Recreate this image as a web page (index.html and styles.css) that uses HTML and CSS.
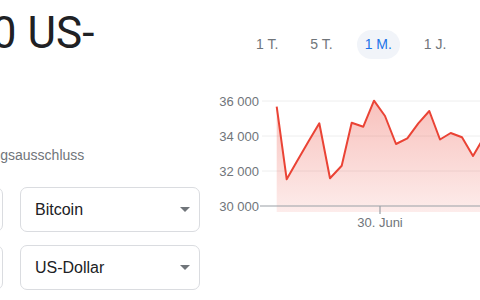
FILE: index.html
```html
<!DOCTYPE html>
<html lang="de">
<head>
    <meta charset="UTF-8">
    <meta name="viewport" content="width=device-width, initial-scale=1.0">
    <title>Bitcoin in US-Dollar</title>
    <link rel="stylesheet" href="styles.css">
</head>
<body>
    <div class="page">
        <!-- Converter column (cut off on the left) -->
        <div class="converter">
            <div class="result">34 590 US-</div>
            <div class="source">Haftungsausschluss</div>
            <div class="fields">
                <div class="field"><span class="amount">1</span></div>
                <div class="field select">
                    <span>Bitcoin</span>
                    <span class="caret"></span>
                </div>
                <div class="field"><span class="amount">34590</span></div>
                <div class="field select">
                    <span>US-Dollar</span>
                    <span class="caret"></span>
                </div>
            </div>
        </div>

        <!-- Chart column -->
        <div class="chart-panel">
            <div class="ranges">
                <span class="range">1 T.</span>
                <span class="range">5 T.</span>
                <span class="range active">1 M.</span>
                <span class="range">1 J.</span>
            </div>
            <svg class="chart" width="300" height="145" viewBox="210 85 300 145">
                <defs>
                    <linearGradient id="fade" x1="0" y1="100" x2="0" y2="212" gradientUnits="userSpaceOnUse">
                        <stop offset="0" stop-color="#ea4335" stop-opacity="0.33"/>
                        <stop offset="1" stop-color="#ea4335" stop-opacity="0.1"/>
                    </linearGradient>
                </defs>
                <g class="grid">
                    <line x1="262" y1="101" x2="510" y2="101"/>
                    <line x1="262" y1="136" x2="510" y2="136"/>
                    <line x1="262" y1="171" x2="510" y2="171"/>
                </g>
                <path class="area" d="M276.7,106.7 L286.7,179.3 L296.7,161.7 L308.3,141.7 L319.3,123.3 L330,178.3 L341.7,165.7 L351.7,122.7 L363.3,126.7 L374,100.7 L385,116 L396,144 L407.3,138.3 L418.3,123.3 L429.3,111 L440,139.5 L450.7,133 L462,137.3 L473,156 L484,137 L484,212 L276.7,212 Z"/>
                <polyline class="line" points="276.7,106.7 286.7,179.3 296.7,161.7 308.3,141.7 319.3,123.3 330,178.3 341.7,165.7 351.7,122.7 363.3,126.7 374,100.7 385,116 396,144 407.3,138.3 418.3,123.3 429.3,111 440,139.5 450.7,133 462,137.3 473,156 484,137"/>
                <line class="axis" x1="260" y1="206" x2="510" y2="206"/>
                <line class="axis" x1="380" y1="206" x2="380" y2="214"/>
                <g class="labels">
                    <text x="259" y="105.7" text-anchor="end">36 000</text>
                    <text x="259" y="140.7" text-anchor="end">34 000</text>
                    <text x="259" y="175.7" text-anchor="end">32 000</text>
                    <text x="259" y="210.7" text-anchor="end">30 000</text>
                    <text x="380" y="226.5" text-anchor="middle">30. Juni</text>
                </g>
            </svg>
        </div>
    </div>
</body>
</html>
```

FILE: styles.css
```css
/* General */
body {
    margin: 0;
    padding: 0;
    background: #fff;
    font-family: "Liberation Sans", Arial, sans-serif;
    color: #202124;
    overflow: hidden;
}

.page {
    display: flex;
    width: 480px;
    height: 300px;
}

/* Converter */
.converter {
    flex: none;
    width: 376px;
    margin-left: -177px;
}

.result {
    margin-top: 7px;
    font-family: Roboto, "Liberation Sans", sans-serif;
    font-size: 44px;
    line-height: 52px;
    white-space: nowrap;
    margin-left: 59px;
}

.source {
    margin-top: 86px;
    margin-left: 136px;
    font-size: 14px;
    line-height: 20px;
    color: #70757a;
    white-space: nowrap;
}

.fields {
    display: grid;
    grid-template-columns: 180px 180px;
    column-gap: 17px;
    row-gap: 13px;
    margin-top: 22px;
}

.field {
    height: 45px;
    box-sizing: border-box;
    border: 1px solid #dadce0;
    border-radius: 7px;
    display: flex;
    align-items: center;
    padding: 0 9px 0 14px;
    font-size: 16px;
}

.field .amount {
    visibility: hidden;
}

.select {
    justify-content: space-between;
}

.caret {
    width: 0;
    height: 0;
    border-left: 5.5px solid transparent;
    border-right: 5.5px solid transparent;
    border-top: 5px solid #70757a;
}

/* Chart */
.chart-panel {
    flex: none;
    width: 300px;
    margin-left: 11px;
}

.ranges {
    display: flex;
    gap: 16px;
    margin-top: 30px;
    padding-left: 38px;
}

.range {
    padding: 0 8px;
    height: 29px;
    line-height: 29px;
    font-size: 14px;
    color: #70757a;
    border-radius: 15px;
    white-space: nowrap;
}

.range.active {
    background: #f1f4f9;
    color: #1a73e8;
}

.chart {
    display: block;
    margin-top: 26px;
}

.grid line {
    stroke: #eeeeee;
    stroke-width: 1;
}

.area {
    fill: url(#fade);
}

.line {
    fill: none;
    stroke: #ea4335;
    stroke-width: 2;
    stroke-linejoin: round;
}

.axis {
    stroke: #9aa0a6;
    stroke-width: 1.2;
}

.labels text {
    font-family: "Liberation Sans", Arial, sans-serif;
    font-size: 13px;
    fill: #70757a;
}
```
